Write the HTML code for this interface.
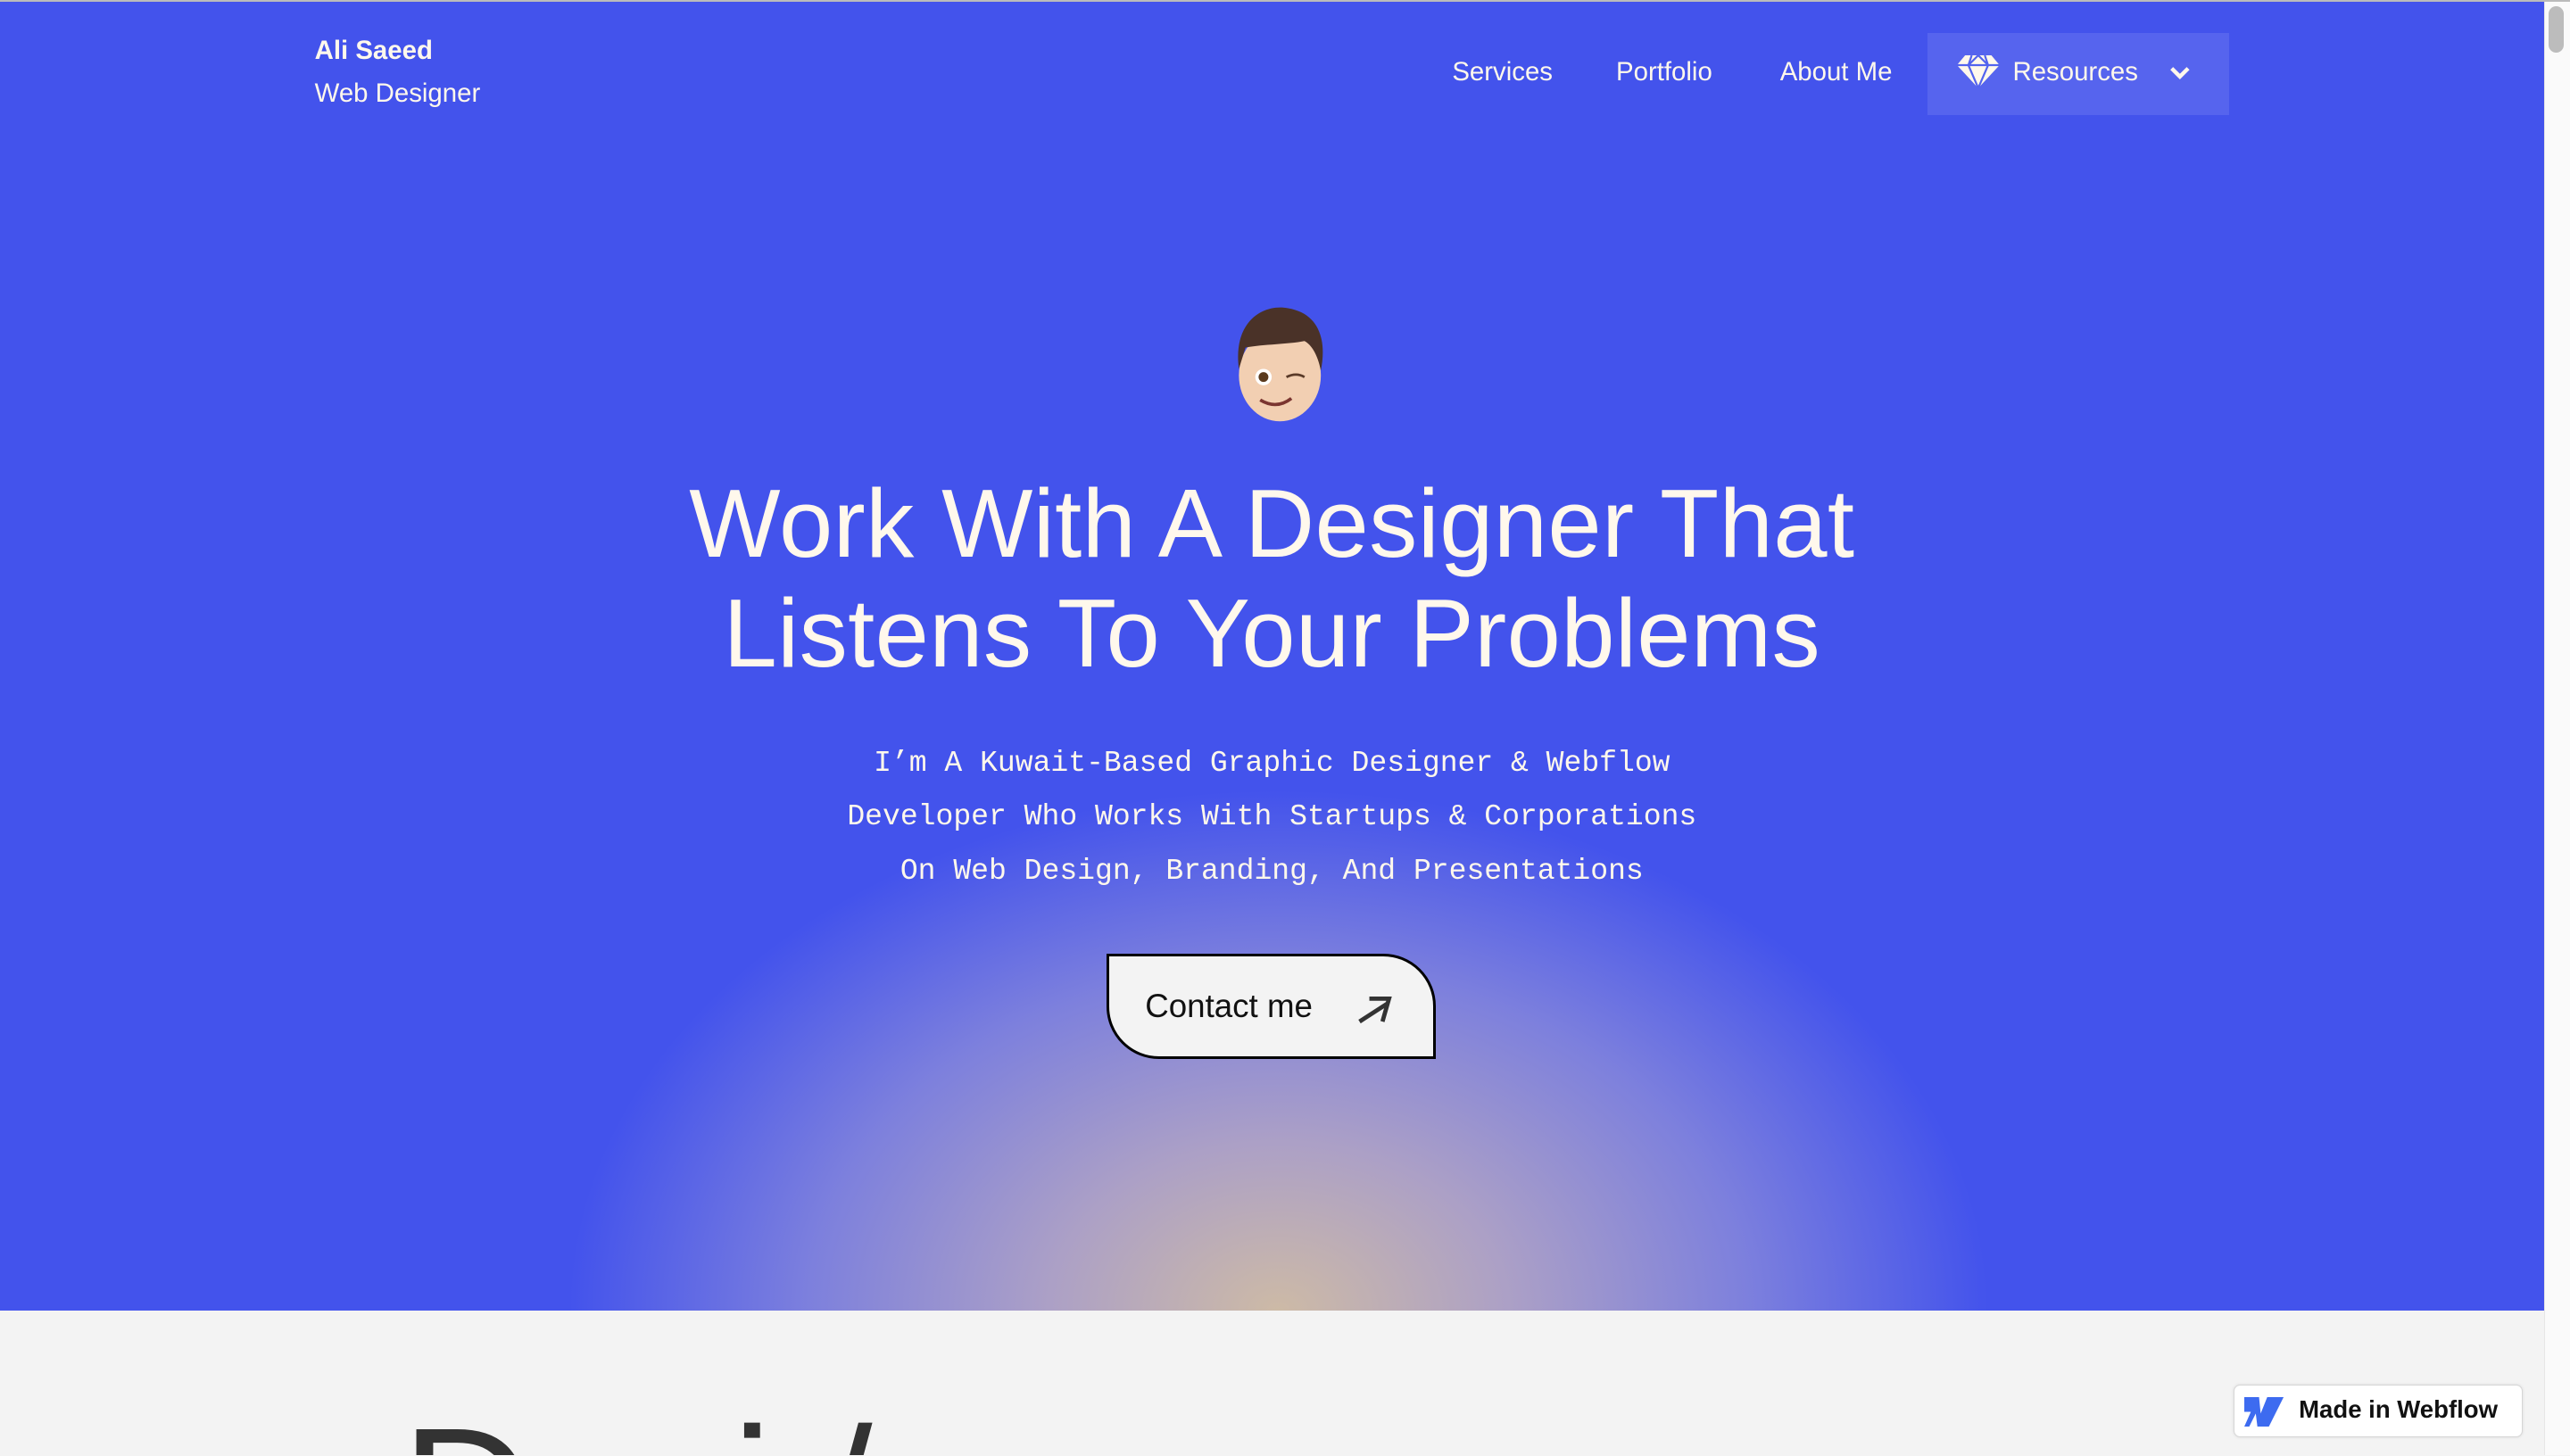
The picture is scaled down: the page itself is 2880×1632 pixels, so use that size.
<!DOCTYPE html>
<html><head><meta charset="utf-8">
<style>
html,body{margin:0;padding:0;overflow:hidden;background:#f3f3f3;height:1632px}
#w{zoom:1.83674;width:1568px;height:888px;position:relative;overflow:hidden;font-family:"Liberation Sans",sans-serif}
.top{position:absolute;left:0;top:0;width:1568px;height:1px;background:#bbb;z-index:5}
.hero{position:absolute;left:0;top:0;width:1552px;height:800px;background:#4353ec;overflow:hidden}
.glow{position:absolute;left:330px;top:470px;width:900px;height:660px;border-radius:50%;background:radial-gradient(ellipse at center,#cdbaa6 0%,#aca0c6 22%,#7d80dd 45%,rgba(67,83,236,0) 68%)}
.c{color:#fff8ec}
.brand{position:absolute;left:192px;top:18px;font-size:16px;line-height:26px}
.nav{position:absolute;top:35px;font-size:16px}
.res{position:absolute;left:1176px;top:20px;width:184px;height:50px;background:rgba(255,255,255,.1)}
h1{position:absolute;left:0;width:1552px;top:286px;margin:0;text-align:center;font-weight:400;font-size:59px;line-height:67px;letter-spacing:.2px}
.sub{position:absolute;left:0;width:1552px;top:449px;text-align:center;font-family:"Liberation Mono",monospace;font-size:18px;line-height:33px}
.btn{position:absolute;left:675px;top:582px;width:198px;height:61px;border:2px solid #000;background:#f3f3f3;border-radius:0 32px 0 32px;box-sizing:content-box}
.btn span{position:absolute;left:22px;top:19px;font-size:20px;color:#111}
.white{position:absolute;left:0;top:800px;width:1552px;height:88px;background:#f3f3f3}
.sb{position:absolute;left:1552px;top:0;width:16px;height:888px;background:#fafafa;border-left:1px solid #e6e6e6;box-sizing:border-box}
.thumb{position:absolute;left:1555px;top:4px;width:9px;height:28px;border-radius:5px;background:#bcbcbc}
.big{position:absolute;left:245px;top:855px;height:33px;overflow:hidden;font-size:110px;color:#333;line-height:1;white-space:nowrap}
.wf{position:absolute;left:1363px;top:845px;width:175px;height:31px;background:#fff;border:1px solid #d6d6d6;border-radius:4px;box-shadow:0 0 2px rgba(0,0,0,.1)}
</style></head><body><div id="w">
<div class="top"></div>
<div class="hero">
<div class="glow"></div>
<div class="brand c"><b>Ali Saeed</b><br>Web Designer</div>
<div class="nav c" style="left:886px">Services</div>
<div class="nav c" style="left:986px">Portfolio</div>
<div class="nav c" style="left:1086px">About Me</div>
<div class="res">
<svg style="position:absolute;left:18px;top:14px" width="26" height="20" viewBox="0 0 26 20"><path d="M5 0h16l5 6-13 14L0 6z" fill="#fff8ec"/><path d="M0 6h26M9 0l-2 6 6 14 6-14-2-6M13 0l-6 6M13 0l6 6" stroke="#5363ee" stroke-width="1.2" fill="none"/></svg>
<span class="c" style="position:absolute;left:52px;top:15px;font-size:16px">Resources</span>
<svg style="position:absolute;left:147px;top:20px" width="14" height="10" viewBox="0 0 14 10"><path d="M2 2l5 5 5-5" stroke="#fff8ec" stroke-width="2.4" fill="none"/></svg>
</div>
<svg style="position:absolute;left:752px;top:185px" width="58" height="74" viewBox="0 0 58 74">
<ellipse cx="29" cy="44" rx="25" ry="28" fill="#f2cfb2"/>
<path d="M4 40C0 10 20 0 34 3c18 3 24 18 20 38-2-10-6-16-10-18-10 2-26 2-36 4z" fill="#4a3228"/>
<circle cx="19" cy="45" r="5" fill="#fff"/><circle cx="19" cy="45" r="3" fill="#5a3a1e"/>
<path d="M33 45q6-3 11 0" stroke="#5a3a28" stroke-width="1.5" fill="none"/>
<path d="M17 59q10 6 19-1q-9 7-19 1z" fill="#7a3530" stroke="#7a3530" stroke-width="2"/>
</svg>
<h1 class="c">Work With A Designer That<br>Listens To Your Problems</h1>
<div class="sub c">I’m A Kuwait-Based Graphic Designer &amp; Webflow<br>Developer Who Works With Startups &amp; Corporations<br>On Web Design, Branding, And Presentations</div>
<div class="btn"><span>Contact me</span>
<svg style="position:absolute;left:150px;top:22px" width="24" height="22" viewBox="0 0 24 22"><path d="M3 18L20 7M9 4h12l-4 14" stroke="#333" stroke-width="2.6" fill="none"/></svg></div>
</div>
<div class="white"></div>
<div class="big">D&nbsp;&nbsp;&nbsp;&nbsp;i&nbsp;/</div>
<div class="wf"><svg style="position:absolute;left:6px;top:7px" width="28" height="18" viewBox="0 0 28 18"><path d="M0 0h9l1 10 4-10h8l2 0-9 18h-7l-1-8-4 8H0l4-9H0z" fill="#3d6bf0"/></svg>
<span style="position:absolute;left:39px;top:6px;font-size:15px;font-weight:700;color:#111">Made in Webflow</span></div>
<div class="sb"></div><div class="thumb"></div>
</div></body></html>
